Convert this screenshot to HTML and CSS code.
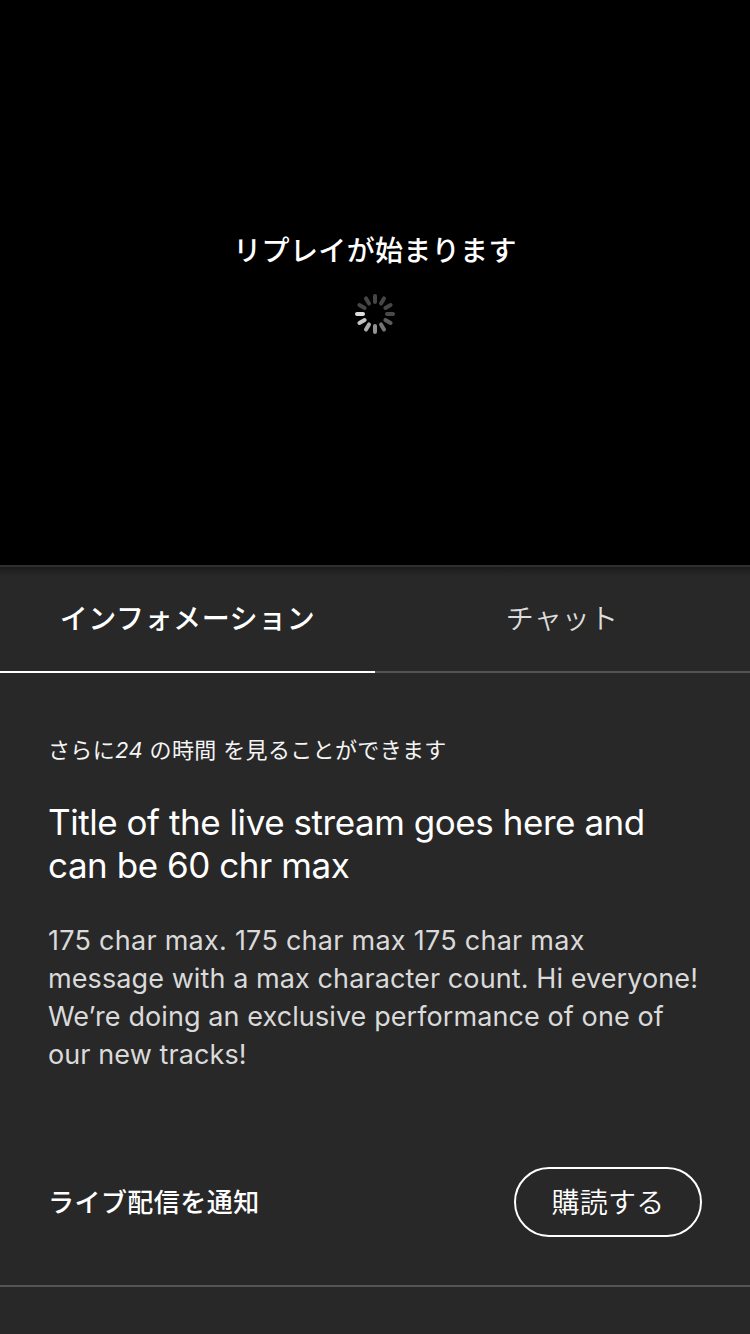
FILE: index.html
```html
<!DOCTYPE html>
<html lang="ja">
<head>
<meta charset="utf-8">
<title>Live</title>
<link rel="stylesheet" href="styles.css">
</head>
<body>
<main class="screen">
  <section class="player">
    <p class="player-text">リプレイが始まります</p>
    <svg class="spinner" viewBox="-20 -20 40 40" stroke-width="4" stroke-linecap="round">
      <path d="M0-18V-12" stroke="#464646"/>
      <path d="M0-18V-12" stroke="#464646" transform="rotate(30)"/>
      <path d="M0-18V-12" stroke="#464646" transform="rotate(60)"/>
      <path d="M0-18V-12" stroke="#4a4a4a" transform="rotate(90)"/>
      <path d="M0-18V-12" stroke="#5c5c5c" transform="rotate(120)"/>
      <path d="M0-18V-12" stroke="#757575" transform="rotate(150)"/>
      <path d="M0-18V-12" stroke="#929292" transform="rotate(180)"/>
      <path d="M0-18V-12" stroke="#acacac" transform="rotate(210)"/>
      <path d="M0-18V-12" stroke="#c4c4c4" transform="rotate(240)"/>
      <path d="M0-18V-12" stroke="#dedede" transform="rotate(270)"/>
      <path d="M0-18V-12" stroke="#464646" transform="rotate(300)"/>
      <path d="M0-18V-12" stroke="#464646" transform="rotate(330)"/>
    </svg>
  </section>
  <nav class="tabs">
    <a class="tab active">インフォメーション</a>
    <a class="tab">チャット</a>
  </nav>
  <section class="info">
    <p class="remaining">さらに<em>24</em> の時間 を見ることができます</p>
    <h1 class="title">Title of the live stream goes here and<br>can be 60 chr max</h1>
    <p class="message"><span class="lead">175 char max. 175 char max 175 char max</span><br>message with a max character count. Hi everyone!<br>We’re doing an exclusive performance of one of<br>our new tracks!</p>
  </section>
  <section class="subscribe">
    <span class="notify">ライブ配信を通知</span>
    <button class="button">購読する</button>
  </section>
</main>
</body>
</html>
```
FILE: styles.css
```css
* { box-sizing: border-box; }
body { margin: 0; background: #282828; }
p, h1 { margin: 0; }
.screen {
  width: 750px;
  height: 1334px;
  overflow: hidden;
  background: #282828;
  color: #fff;
  font-family: Inter, "Noto Sans CJK JP", sans-serif;
}
.player {
  height: 565px;
  padding-top: 231px;
  background: #000;
  display: flex;
  flex-direction: column;
  align-items: center;
}
.player-text { font-size: 28px; line-height: 40px; font-weight: 500; letter-spacing: 0.35px; }
.spinner { width: 40px; height: 40px; margin-top: 23px; }
.tabs {
  display: flex;
  height: 108px;
  border-top: 2px solid #303030;
  background: linear-gradient(#1b1b1b, #282828 9px);
}
.tab {
  width: 375px;
  padding-top: 32px;
  padding-right: 1px;
  border-bottom: 2px solid #545454;
  text-align: center;
  font-size: 28px;
  line-height: 40px;
  color: #dcdcdc;
  font-weight: 350;
  letter-spacing: 0.2px;
}
.tab.active { padding-right: 0; color: #fff; font-weight: 500; letter-spacing: 0.55px; border-color: #fff; }
.info { height: 454px; padding: 61px 48px 0; }
.remaining { font-size: 22px; line-height: 32px; color: #f4f4f4; letter-spacing: 0.35px; white-space: nowrap; }
.title { margin-top: 35px; font-size: 35px; line-height: 43px; font-weight: 400; letter-spacing: -0.45px; white-space: nowrap; }
.message { margin-top: 35px; font-size: 27px; line-height: 38px; color: #dadada; letter-spacing: 0.09px; white-space: nowrap; }
.lead { letter-spacing: 0.26px; }
.subscribe {
  height: 160px;
  padding: 40px 48px 48px;
  border-bottom: 2px solid #545454;
  display: flex;
  align-items: center;
  justify-content: space-between;
}
.notify { padding-top: 1px; font-size: 26px; line-height: 40px; font-weight: 500; letter-spacing: 0.45px; }
.button {
  width: 188px;
  height: 70px;
  padding: 1px 0 0;
  border: 2px solid #fff;
  border-radius: 35px;
  background: none;
  color: #fff;
  font: 350 28px/40px Inter, "Noto Sans CJK JP", sans-serif;
  letter-spacing: 0.3px;
}
```
